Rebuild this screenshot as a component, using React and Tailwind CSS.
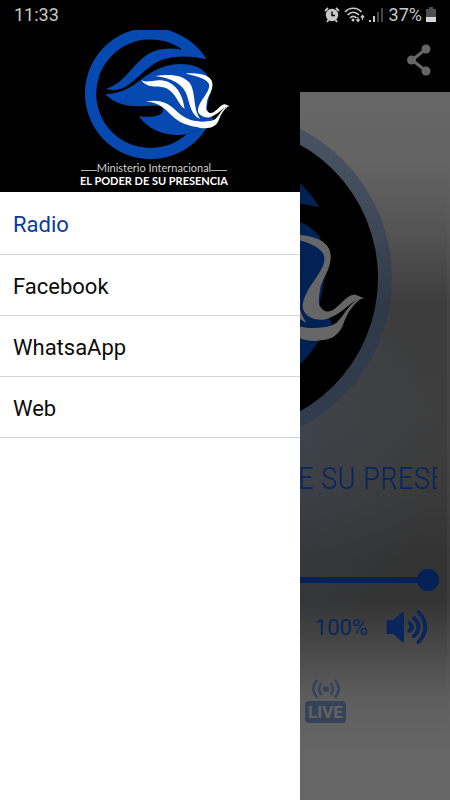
import React from 'react';

const menuItems = [
  { label: 'Radio', active: true },
  { label: 'Facebook' },
  { label: 'WhatsaApp' },
  { label: 'Web' },
];

const EmblemShapes = ({ blue }) => (
  <g>
    <g fill={blue}>
      {/* Open ring with the upper arm */}
      <path d="M380 100A197 197 0 1 0 380 305L320 325A163 163 0 1 1 307 71C280 66 250 66 226 74C165 94 140 172 78 188C100 196 124 192 146 176C184 148 206 118 244 102C290 86 340 90 380 100Z" />
      {/* Hand */}
      <path d="M75 205C125 204 155 182 184 160C225 128 262 114 300 114C335 114 360 122 380 144L392 190L380 250L400 280L380 305L320 325C262 334 202 312 177 270C208 276 248 272 249 252C248 236 224 239 190 240C140 244 104 232 75 205Z" />
    </g>
    {/* Dove */}
    <g fill="#fff">
      <path d="M184 163C204 172 220 161 244 163C288 168 308 206 314 249C292 232 290 204 262 188C240 176 206 192 184 163Z" />
      <path d="M225 150C268 144 310 146 330 172C348 200 338 248 360 279C334 266 330 238 322 212C312 174 274 156 225 150Z" />
      <path d="M316 143C336 140 364 142 380 150C394 157 399 168 397 182C394 202 384 210 381 226C379 240 377 250 382 255C387 262 393 263 402 258C414 250 422 236 435 235L450 241C432 240 418 262 400 269C390 275 382 275 372 273C360 268 353 262 354 250C357 230 372 216 382 197C388 187 389 178 386 172C376 156 350 150 316 143Z" />
      <path d="M196 226C236 220 262 228 286 252C308 274 330 284 351 285C364 288 372 287 382 286C392 285 398 284 406 279C420 266 426 246 446 240C430 252 424 264 419 275C412 296 402 304 382 306C370 308 360 306 351 303C310 298 290 284 268 262C246 238 228 230 196 226Z" />
    </g>
  </g>
);

const StatusBar = () => (
  <div className="absolute inset-x-0 top-0 z-30 flex h-[30px] items-center justify-between pl-3.5 pr-3.5 text-lg text-[#c8c8c8]">
    <span>11:33</span>
    <div className="flex items-center gap-1">
      <svg width="16" height="16" viewBox="0 0 16 16" aria-hidden="true">
        <circle cx="8" cy="8" r="6.2" fill="currentColor" />
        <path d="M1 4L4 1M15 4L12 1M3 15L4.5 13M13 15L11.5 13" stroke="currentColor" strokeWidth="1.8" />
        <path d="M8 4.5V8.5H11" fill="none" stroke="#000" strokeWidth="1.4" />
      </svg>
      <svg width="21" height="16" viewBox="0 0 21 16" fill="none" stroke="currentColor" aria-hidden="true">
        <path d="M1 5C5.5 0 13 0 17.5 5M3.5 8C7 4.5 11.5 4.5 15 8M6 11C8 9 10.5 9 12.5 11" strokeWidth="1.7" />
        <circle cx="9" cy="13" r="1.5" fill="currentColor" stroke="none" />
        <path d="M14 10V14M12.3 12.5L14 14.5L15.7 12.5M18.5 13V9M16.8 10.5L18.5 8.5L20.2 10.5" strokeWidth="1.2" />
      </svg>
      <svg width="14" height="16" viewBox="0 0 14 16" fill="currentColor" aria-hidden="true">
        <path d="M0 13H2V15H0ZM4 9H6V15H4Z" />
        <path d="M8 5H10V15H8ZM12 1H14V15H12Z" fill="#454545" />
      </svg>
      <span className="pl-0.5">37%</span>
      <svg width="10" height="16" viewBox="0 0 10 16" aria-hidden="true">
        <path d="M3 0H7V2H10V10H0V2H3Z" fill="#505050" />
        <path d="M0 10H10V15H0Z" fill="#d8d8d8" />
      </svg>
    </div>
  </div>
);

const Drawer = () => (
  <aside className="absolute inset-y-0 left-0 z-20 w-2/3 bg-white">
    <div className="flex h-[192px] flex-col items-center bg-black pl-2 pt-[30px] text-white">
      <svg className="w-[162px] shrink-0" viewBox="-21 12 486 390" role="img" aria-label="Logo">
        <EmblemShapes blue="#0649b0" />
      </svg>
      <div className="flex items-end font-['Lato'] text-[11px] leading-[15px] text-[#d0d0d0]">
        <span className="mb-1 w-4 border-b border-[#b0b0b0]" />
        Ministerio Internacional
        <span className="mb-1 w-4 border-b border-[#b0b0b0]" />
      </div>
      <p className="whitespace-nowrap font-['Lato'] text-[11px] font-bold leading-[11px]">EL PODER DE SU PRESENCIA</p>
    </div>
    <nav>
      {menuItems.map((item) => (
        <a
          key={item.label}
          href="#"
          className={`flex h-[61px] items-center border-b border-[#d4d4d4] px-[13px] pt-0.5 text-[22px] first:h-[63px] ${item.active ? 'text-[#0b3a9c]' : 'text-[#0c0c0c]'}`}
        >
          {item.label}
        </a>
      ))}
    </nav>
  </aside>
);

const Player = () => (
  <main className="flex-1 bg-[radial-gradient(ellipse_at_62%_50%,rgba(160,190,245,0.4),transparent_40%),linear-gradient(#fff,#f8f8f8_10%,#d0d0d0_20%,#989898_30%,#9c9c9c_45%,#949494_55%,#808080_66%,#828282_72%,#b8b8b8_79%,#ebebeb_86%,#fff_94%)] pt-[19px] text-[#1560e6] shadow-[inset_-3px_0_0_rgba(255,255,255,0.15)]">
    <svg className="w-full" viewBox="0 0 450 334" aria-hidden="true">
      <circle cx="225" cy="167" r="167" fill="rgba(70,130,220,0.4)" />
      <circle cx="225" cy="167" r="153" fill="#000" />
      <g transform="translate(74.4 32) scale(0.645)">
        <EmblemShapes blue="#0655d4" />
      </g>
    </svg>
    {/* Scrolling station name */}
    <div className="mr-[13px] mt-3 flex justify-end overflow-hidden">
      <p className="-mr-[9px] whitespace-nowrap font-['Liberation_Sans_Narrow','Roboto_Condensed','Roboto',sans-serif] text-[32px] font-light leading-[42px]">DE SU PRESE</p>
    </div>
    <div className="flex px-[11px] pt-[70px]">
      <input
        type="range"
        aria-label="Volumen"
        defaultValue="100"
        className="h-[22px] w-full appearance-none bg-transparent [&::-webkit-slider-runnable-track]:h-[6px] [&::-webkit-slider-runnable-track]:bg-[#0a54d8] [&::-webkit-slider-thumb]:-mt-[8px] [&::-webkit-slider-thumb]:size-[22px] [&::-webkit-slider-thumb]:appearance-none [&::-webkit-slider-thumb]:rounded-full [&::-webkit-slider-thumb]:bg-[#0a54d8]"
      />
    </div>
    <div className="flex items-center justify-end gap-[18px] pr-[22px] pt-[18px] text-[22px]">
      <span>100%</span>
      <svg width="42" height="36" viewBox="0 0 42 36" fill="none" stroke="currentColor" strokeLinecap="round" aria-hidden="true">
        <path d="M2 12.5H8L16.5 4.5V31.5L8 23.5H2Z" fill="currentColor" strokeWidth="3" strokeLinejoin="round" />
        <path d="M23.5 14Q28 18 23.5 22M28 9Q37 18 28 27M32.5 3Q46 18 32.5 33" strokeWidth="4" />
      </svg>
    </div>
    <div className="flex justify-end pr-26 pt-[33px]">
      <div className="flex w-[41px] flex-col items-center text-[#87a5dc]">
        <svg width="28" height="21" viewBox="0 0 28 21" fill="none" stroke="currentColor" strokeWidth="2.5" strokeLinecap="round" aria-hidden="true">
          <circle cx="14" cy="11" r="3" fill="currentColor" stroke="none" />
          <path d="M9 6Q5 11 9 16M19 6Q23 11 19 16M4.5 2.5Q-2 11 4.5 19M23.5 2.5Q30 11 23.5 19" />
        </svg>
        <span className="mt-0.5 w-full rounded-sm bg-current text-center text-[17px] font-bold leading-[22px]">
          <span className="text-[#f4f4f4]">LIVE</span>
        </span>
      </div>
    </div>
  </main>
);

const App = () => (
  <div className="relative flex min-h-screen flex-col overflow-hidden bg-black font-['Roboto',sans-serif]">
    <header className="flex h-[92px] items-center justify-end pr-[19px] pt-7">
      <button type="button" aria-label="Compartir" className="text-white">
        <svg width="24" height="32" viewBox="0 0 24 32" fill="currentColor" aria-hidden="true">
          <path d="M19 5L5 16L19 27" fill="none" stroke="currentColor" strokeWidth="3" />
          <circle cx="19" cy="5" r="4.5" />
          <circle cx="4.5" cy="16" r="4.5" />
          <circle cx="19" cy="27" r="4.5" />
        </svg>
      </button>
    </header>
    <Player />
    <div className="absolute inset-0 z-10 bg-black/60" />
    <Drawer />
    <StatusBar />
  </div>
);

export default App;
